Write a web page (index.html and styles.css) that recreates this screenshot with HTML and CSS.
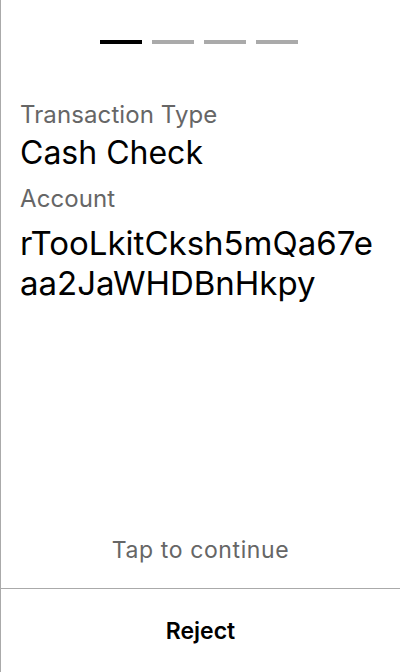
FILE: index.html
```html
<!DOCTYPE html>
<html>
<head>
<meta charset="utf-8">
<link rel="stylesheet" href="styles.css">
</head>
<body>
<div class="screen">
  <div class="progress">
    <span class="seg active"></span>
    <span class="seg"></span>
    <span class="seg"></span>
    <span class="seg"></span>
  </div>
  <div class="content">
    <div class="label">Transaction Type</div>
    <div class="value value-type">Cash Check</div>
    <div class="label">Account</div>
    <div class="value value-account">rTooLkitCksh5mQa67eaa2JaWHDBnHkpy</div>
  </div>
  <div class="tap">Tap to continue</div>
  <div class="footer">
    <div class="reject">Reject</div>
  </div>
</div>
</body>
</html>
```
FILE: styles.css
```css
html, body {
  margin: 0;
  padding: 0;
  background: #fff;
}
body {
  font-family: Inter, "Noto Sans", sans-serif;
}
.screen {
  width: 400px;
  height: 672px;
  box-sizing: border-box;
  border-left: 1px solid #aaa;
  display: flex;
  flex-direction: column;
}
.progress {
  display: flex;
  justify-content: center;
  gap: 10px;
  padding: 40px 3px 0 0;
}
.seg {
  width: 42px;
  height: 4px;
  background: #aaa;
}
.seg.active {
  background: #000;
}
.content {
  padding: 56px 20px 0 19px;
  flex: 1;
}
.label {
  font-size: 24px;
  line-height: 30px;
  color: #666;
  letter-spacing: 0.1px;
}
.value {
  color: #000;
  word-break: break-all;
}
.value-type {
  font-size: 32px;
  line-height: 38px;
  margin-top: 4px;
  margin-bottom: 12px;
}
.value-account {
  font-size: 33px;
  line-height: 40px;
  margin-top: 9px;
}
.tap {
  text-align: center;
  font-size: 23px;
  letter-spacing: 0.6px;
  color: #666;
  line-height: 28px;
  padding-bottom: 24px;
}
.footer {
  border-top: 1px solid #aaa;
  height: 83px;
  display: flex;
  align-items: center;
  justify-content: center;
}
.reject {
  font-size: 23px;
  font-weight: 600;
  color: #000;
}
```
